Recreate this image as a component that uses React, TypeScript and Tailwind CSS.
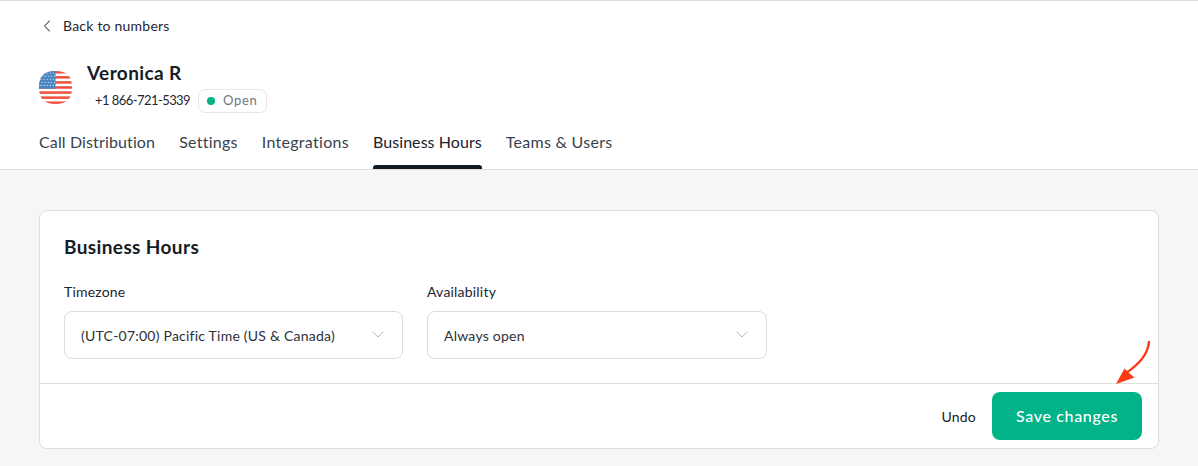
import React from "react";

function Flag() {
  const stripes = [0, 2, 4, 6, 8, 10, 12];
  return (
    <svg width="33" height="33" viewBox="0 0 32 32" className="block">
      <defs>
        <clipPath id="flagclip">
          <path d="M16 0C5 0 0 5 0 16s5 16 16 16 16-5 16-16S27 0 16 0Z" />
        </clipPath>
      </defs>
      <g clipPath="url(#flagclip)">
        <rect width="32" height="32" fill="#ffffff" />
        {stripes.map((s) => (
          <rect key={s} x="0" y={s * 2.46} width="32" height="2.46" fill="#ee5340" />
        ))}
        <rect width="16" height="17.2" fill="#4a86c0" />
        {[2, 5, 8, 11, 14].map((y, i) =>
          [2, 5, 8, 11, 14].map((x) => (
            <circle key={`${x}-${y}`} cx={x + (i % 2 ? 1 : 0)} cy={y} r="0.6" fill="#dce9f5" />
          ))
        )}
      </g>
    </svg>
  );
}

function Chevron({ className }: { className?: string }) {
  return (
    <svg width="12" height="7" viewBox="0 0 12 7" fill="none" className={className}>
      <path d="M1 1l5 5 5-5" stroke="#b5b5b0" strokeWidth="1" strokeLinecap="round" strokeLinejoin="round" />
    </svg>
  );
}

function Select({ label, value, width }: { label: string; value: string; width: string }) {
  return (
    <div className={width}>
      <div className="h-[20px] text-[14px] leading-[20px] tracking-[0.2px] text-[#1c2530]">{label}</div>
      <div className="mt-[9px] flex h-[48px] items-center justify-between rounded-[8px] border border-[#dcdcdc] bg-white pl-[16px] pr-[18px] text-[14px] tracking-[0.23px] text-[#2b3138]">
        <span>{value}</span>
        <Chevron className="-mt-[2px]" />
      </div>
    </div>
  );
}

const tab = "flex h-[51px] flex-col pt-[12px]";

export default function App() {
  return (
    <div
      className="flex h-[466px] w-[1198px] flex-col overflow-hidden bg-[#f6f6f6]"
      style={{ fontFamily: '"Lato", "Noto Sans", sans-serif' }}
    >
      <header className="h-[170px] border-y border-[#dedede] border-t-[#dcdcdc] bg-white pl-[39px]">
        <div className="flex h-[47px] items-center pt-[1px] text-[14px] tracking-[0.22px] text-[#1f2832]">
          <svg width="10" height="12" viewBox="0 0 10 12" fill="none" className="ml-[3px] mt-[2px]">
            <path d="M7.5 1L2.5 6l5 5" stroke="#6b7280" strokeWidth="1.1" strokeLinecap="round" strokeLinejoin="round" />
          </svg>
          <span className="ml-[11px]">Back to numbers</span>
        </div>
        <div className="mt-[9px] flex h-[60px] items-center">
          <Flag />
          <div className="ml-[15px]">
            <div className="text-[19px] font-bold leading-[24px] tracking-[0.4px] text-[#141c26]">Veronica R</div>
            <div className="mt-[4px] flex items-center pl-[8px]">
              <span className="text-[13px] tracking-[-0.56px] text-[#1f2832]">+1 866-721-5339</span>
              <span className="ml-[8px] flex h-[24px] items-center rounded-[7px] border border-[#e6e6e6] pl-[8px] pr-[8px] text-[13px] tracking-[0.7px] text-[#6f7680]">
                <span className="mr-[8px] size-[8px] rounded-full bg-[#00b388]" />
                Open
              </span>
            </div>
          </div>
        </div>
        <nav className="mt-[1px] flex gap-[24px] text-[16px] text-[#3a424c]">
          <a className={`${tab} tracking-[0.13px]`}>Call Distribution</a>
          <a className={`${tab} tracking-[0.26px]`}>Settings</a>
          <a className={`${tab} tracking-[0.3px]`}>Integrations</a>
          <a className={`relative ${tab} tracking-[0.06px] text-[#1a222c]`}>
            Business Hours
            <span className="absolute bottom-0 left-0 right-0 h-[4px] rounded-t-[3px] bg-[#121a24]" />
          </a>
          <a className={`${tab} tracking-[0.28px]`}>Teams &amp; Users</a>
        </nav>
      </header>
      <main className="px-[39px] pt-[40px]">
        <section className="relative h-[239px] w-[1120px] rounded-[8px] border border-[#dedede] bg-white">
          <div className="h-[172px] px-[24px] pt-[24px]">
            <h2 className="text-[19px] font-bold leading-[24px] tracking-[0.38px] text-[#141c26]">Business Hours</h2>
            <div className="mt-[23px] flex gap-[24px]">
              <Select label="Timezone" value="(UTC-07:00) Pacific Time (US & Canada)" width="w-[339px]" />
              <Select label="Availability" value="Always open" width="w-[340px]" />
            </div>
          </div>
          <div className="flex h-[65px] items-center justify-end border-t border-[#dedede] pr-[16px]">
            <button className="text-[14px] tracking-[0.2px] text-[#141c26]">Undo</button>
            <button className="ml-[16px] h-[48px] w-[150px] rounded-[8px] bg-[#00b388] text-[16px] font-medium tracking-[0.65px] text-white">
              Save changes
            </button>
          </div>
          <svg
            width="40"
            height="48"
            viewBox="0 0 40 48"
            fill="none"
            className="absolute left-[1074px] top-[129px]"
          >
            <path d="M35 2C34 14 24 25 12 33" stroke="#f93a14" strokeWidth="2.4" strokeLinecap="round" />
            <path d="M2 44L10.5 28.5 L15 33 L20.5 37.5Z" fill="#f93a14" />
          </svg>
        </section>
      </main>
    </div>
  );
}
